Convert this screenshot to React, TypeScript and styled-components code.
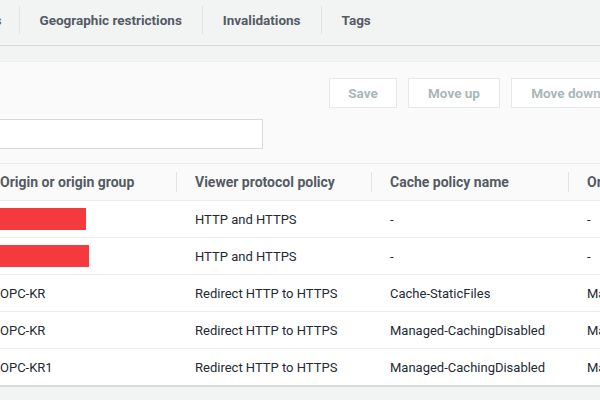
import React from 'react';
import styled, { createGlobalStyle } from 'styled-components';

const Global = createGlobalStyle`
  html, body {
    margin: 0;
    padding: 0;
    background: #f2f3f3;
    font-family: Roboto, "Liberation Sans", Arial, sans-serif;
    overflow: hidden;
  }
`;

const Page = styled.div`
  width: 600px;
  height: 400px;
  overflow: hidden;
  background: #f2f3f3;
`;

const TabBar = styled.div`
  display: flex;
  align-items: center;
  height: 46px;
  box-sizing: border-box;
  padding-bottom: 6px;
  margin-left: -79px;
  border-bottom: 1px solid #d5dbdb;
`;

const Tab = styled.div<{ first?: boolean }>`
  display: flex;
  align-items: center;
  height: 28px;
  padding: ${p => (p.first ? '0 17px 0 20px' : '0 20px')};
  border-left: ${p => (p.first ? 'none' : '1px solid #dfe3e3')};
  font-size: 13.5px;
  font-weight: 700;
  color: #545b64;
  white-space: nowrap;
`;

const Panel = styled.div`
  margin-top: 15px;
  background: #fafafa;
  border-top: 1px solid #eaeded;
  padding-top: 16px;
`;

const Actions = styled.div`
  display: flex;
  gap: 11px;
  padding-left: 329px;
  height: 30px;
`;

const Button = styled.div<{ w: number }>`
  flex: 0 0 auto;
  width: ${p => p.w}px;
  height: 30px;
  box-sizing: border-box;
  border: 1px solid #e6e9e9;
  background: #ffffff;
  display: flex;
  align-items: center;
  justify-content: center;
  font-size: 13.5px;
  font-weight: 700;
  color: #aab7b8;
  white-space: nowrap;
`;

const SearchRow = styled.div`
  padding-top: 11px;
  margin-left: -20px;
  height: 30px;
`;

const Search = styled.div`
  width: 283px;
  height: 30px;
  box-sizing: border-box;
  border: 1px solid #d5dbdb;
  background: #ffffff;
`;

const Table = styled.div`
  margin-top: 14px;
  margin-left: -18px;
  width: 800px;
  border-top: 1px solid #eaeded;
  border-bottom: 2px solid #d5dbdb;
`;

const Grid = styled.div<{ header?: boolean }>`
  display: grid;
  grid-template-columns: 195px 195px 197px 213px;
  box-sizing: border-box;
  height: ${p => (p.header ? '36px' : '37px')};
  background: ${p => (p.header ? '#fafafa' : '#ffffff')};
  border-top: ${p => (p.header ? 'none' : '1px solid #eaeded')};
`;

const HeadCell = styled.div<{ sep?: boolean }>`
  display: flex;
  align-items: center;
  padding-left: 18px;
  font-size: 14px;
  font-weight: 700;
  color: #545b64;
  white-space: nowrap;
  position: relative;
  ${p =>
    p.sep
      ? `&::before {
    content: '';
    position: absolute;
    left: -1px;
    top: 8px;
    bottom: 8px;
    width: 1px;
    background: #e3e6e6;
  }`
      : ''}
`;

const Cell = styled.div`
  display: flex;
  align-items: center;
  padding-left: 18px;
  font-size: 13px;
  color: #232a33;
  white-space: nowrap;
`;

const Redacted = styled.div<{ w: number }>`
  width: ${p => p.w}px;
  height: 22px;
  margin-left: -18px;
  background: #f43a3c;
`;

type Row = { origin?: string; redact?: number; viewer: string; cache: string; req: string };

const rows: Row[] = [
  { redact: 104, viewer: 'HTTP and HTTPS', cache: '-', req: '-' },
  { redact: 107, viewer: 'HTTP and HTTPS', cache: '-', req: '-' },
  { origin: 'OPC-KR', viewer: 'Redirect HTTP to HTTPS', cache: 'Cache-StaticFiles', req: 'Managed-CORS-S3Origin' },
  { origin: 'OPC-KR', viewer: 'Redirect HTTP to HTTPS', cache: 'Managed-CachingDisabled', req: 'Managed-AllViewer' },
  { origin: 'OPC-KR1', viewer: 'Redirect HTTP to HTTPS', cache: 'Managed-CachingDisabled', req: 'Managed-AllViewer' },
];

const App: React.FC = () => (
  <Page>
    <Global />
    <TabBar>
      <Tab first>Behaviors</Tab>
      <Tab>Geographic restrictions</Tab>
      <Tab>Invalidations</Tab>
      <Tab>Tags</Tab>
    </TabBar>
    <Panel>
      <Actions>
        <Button w={68}>Save</Button>
        <Button w={92}>Move up</Button>
        <Button w={110}>Move down</Button>
      </Actions>
      <SearchRow>
        <Search />
      </SearchRow>
      <Table>
        <Grid header>
          <HeadCell>Origin or origin group</HeadCell>
          <HeadCell sep>Viewer protocol policy</HeadCell>
          <HeadCell sep>Cache policy name</HeadCell>
          <HeadCell sep>Origin request policy name</HeadCell>
        </Grid>
        {rows.map((r, i) => (
          <Grid key={i}>
            <Cell>{r.redact ? <Redacted w={r.redact} /> : r.origin}</Cell>
            <Cell>{r.viewer}</Cell>
            <Cell>{r.cache}</Cell>
            <Cell>{r.req}</Cell>
          </Grid>
        ))}
      </Table>
    </Panel>
  </Page>
);

export default App;
